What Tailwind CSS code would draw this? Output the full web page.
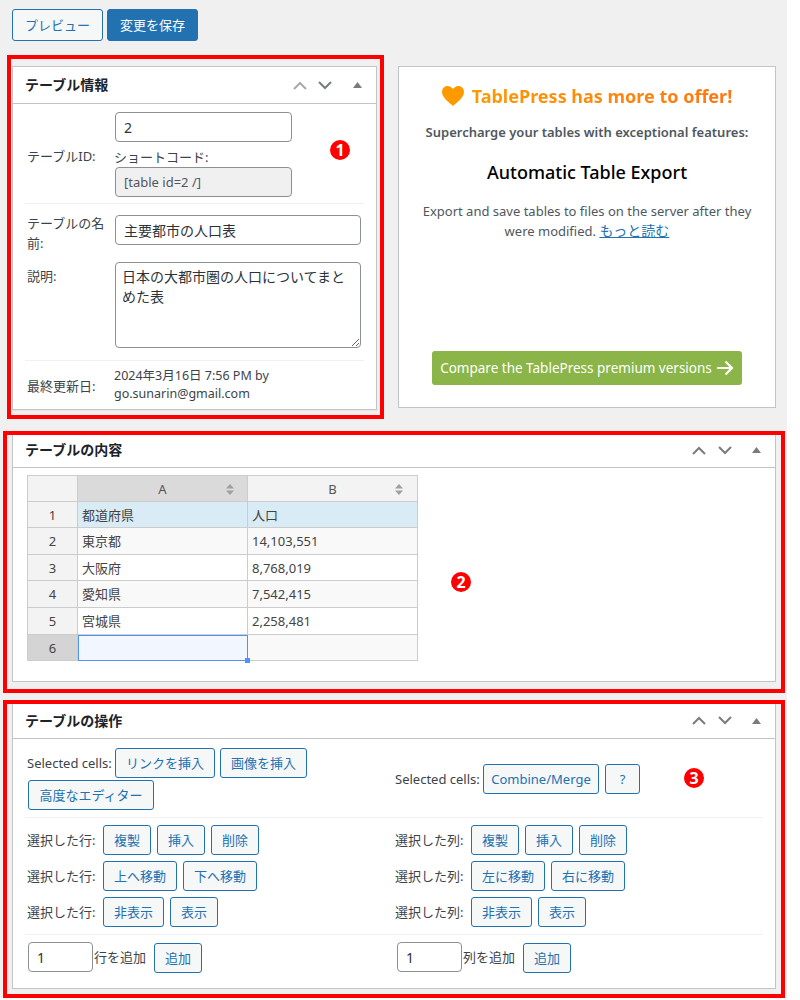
<!DOCTYPE html>
<html lang="ja">

<head>
  <meta charset="UTF-8">
  <title>TablePress</title>
  <script src="https://cdn.jsdelivr.net/npm/@tailwindcss/browser@4"></script>
</head>

<body class="bg-white">
  <main class="relative w-[787px] h-[998px] overflow-hidden bg-[#f0f0f1] pl-3 pt-[9px] text-[13px] leading-[20px] text-[#3c434a] font-['Noto_Sans','Noto_Sans_CJK_JP',sans-serif]">

    <!-- Top buttons -->
    <div class="flex gap-1">
      <button class="w-[91px] h-8 border border-[#2271b1] rounded-[3px] bg-[#f6f7f7] text-[#2271b1] text-[13px]">プレビュー</button>
      <button class="w-[91px] h-8 border border-[#2271b1] rounded-[3px] bg-[#2271b1] text-white text-[13px]">変更を保存</button>
    </div>

    <div class="flex items-start mt-[25px]">
      <!-- Table information -->
      <section class="w-[365px] h-[344px] bg-white border border-[#c3c4c7] shadow-[0_1px_1px_rgba(0,0,0,0.04)]">
        <div class="flex items-center h-[37px] pl-3 pr-[14px] border-b border-[#c3c4c7]">
          <h2 class="text-[14px] font-bold text-[#1d2327] flex-1">テーブル情報</h2>
          <svg class="w-[14px] h-[9px]" viewBox="0 0 14 9" fill="none" stroke="#a7aaad" stroke-width="2"><path d="M1 8l6-6 6 6" /></svg>
          <svg class="w-[14px] h-[9px] ml-[11px]" viewBox="0 0 14 9" fill="none" stroke="#787c82" stroke-width="2"><path d="M1 1l6 6 6-6" /></svg>
          <svg class="w-[9px] h-[6px] ml-[21px]" viewBox="0 0 9 6" fill="#787c82"><path d="M4.5 0L9 6H0z" /></svg>
        </div>
        <div class="mx-3">
          <div class="flex items-center pt-2 pb-[6px] border-b border-[#f0f0f1]">
            <label class="w-[89px] pl-[2px] pt-[2px]">テーブルID:</label>
            <div>
              <input value="2" class="block w-[177px] h-[30px] ml-px px-2 border border-[#8c8f94] rounded-[4px] text-[14px] text-[#2c3338]">
              <p class="mt-[6px] text-[13px] leading-[19px]">ショートコード:</p>
              <input disabled value="[table id=2 /]" class="block w-[177px] h-[30px] ml-px px-2 border border-[#8c8f94] rounded-[4px] bg-[#f0f0f1] text-[13px] text-[#50575e]">
            </div>
          </div>
          <div class="flex pt-[11px]">
            <label class="w-[90px] pl-[2px] pt-[-2px] -mt-[2px] leading-[20px]">テーブルの名前:</label>
            <input value="主要都市の人口表" class="block w-[246px] h-[30px] px-2 border border-[#8c8f94] rounded-[4px] text-[14px] text-[#2c3338]">
          </div>
          <div class="flex mt-[9px] pb-3 border-b border-[#f0f0f1]">
            <label class="w-[90px] pl-[2px] pt-[4px]">説明:</label>
            <textarea class="block w-[246px] h-[86px] px-[6px] py-1 border border-[#8c8f94] rounded-[4px] text-[14px] leading-[20px] text-[#2c3338]">日本の大都市圏の人口についてまとめた表</textarea>
          </div>
          <div class="flex items-center pt-[6px]">
            <label class="w-[89px] pl-[2px] pt-[2px]">最終更新日:</label>
            <p class="leading-[18px] text-[12.5px] w-[200px]">2024年3月16日 7:56 PM by go.sunarin@gmail.com</p>
          </div>
        </div>
      </section>

      <!-- Promo -->
      <section class="w-[378px] h-[342px] ml-[21px] bg-white border border-[#c3c4c7] text-center text-[#50575e]">
        <div class="flex items-center justify-center gap-2 mt-[15px] h-7">
          <svg class="w-[22px] h-[20px]" viewBox="0 0 22 20" fill="#ff9900"><path d="M11 20C8 17 0 12 0 6c0-3.500 2.500-6 5.500-6C8 0 10 1.500 11 3c1-1.500 3-3 5.500-3C19.500 0 22 2.500 22 6c0 6-8 11-11 14z" /></svg>
          <h2 class="text-[18px] font-bold leading-7 bg-linear-to-r from-[#ff9900] to-[#ff7510] bg-clip-text text-transparent">TablePress has more to offer!</h2>
        </div>
        <p class="mt-[12px] font-semibold">Supercharge your tables with exceptional features:</p>
        <h3 class="mt-[18px] text-[18px] leading-6 font-medium text-black">Automatic Table Export</h3>
        <p class="mt-[17px] px-5">Export and save tables to files on the server after they were modified. <a href="#" class="text-[#2271b1] underline text-[14px]">もっと読む</a></p>
        <a href="#" class="mt-[110px] mx-auto flex items-center justify-center gap-1 w-[310px] h-[34px] rounded-[3px] bg-[#8bb548] text-white text-[13.5px]">Compare the TablePress premium versions
          <svg class="w-[18px] h-[16px]" viewBox="0 0 18 16" fill="none" stroke="#fff" stroke-width="2.200"><path d="M1 8h15M9.500 1.500L16 8l-6.500 6.500" /></svg>
        </a>
      </section>
    </div>

    <!-- Table content -->
    <section class="w-[764px] h-[251px] mt-[21px] bg-white border border-[#c3c4c7]">
      <div class="flex items-center h-[36px] pl-3 pr-[14px] pt-[1px] border-b border-[#c3c4c7]">
        <h2 class="text-[14px] font-bold text-[#1d2327] flex-1">テーブルの内容</h2>
        <svg class="w-[14px] h-[9px]" viewBox="0 0 14 9" fill="none" stroke="#787c82" stroke-width="2"><path d="M1 8l6-6 6 6" /></svg>
        <svg class="w-[14px] h-[9px] ml-3" viewBox="0 0 14 9" fill="none" stroke="#787c82" stroke-width="2"><path d="M1 1l6 6 6-6" /></svg>
        <svg class="w-[9px] h-[6px] ml-5" viewBox="0 0 9 6" fill="#787c82"><path d="M4.500 0L9 6H0z" /></svg>
      </div>
      <table class="ml-[14px] mt-[7px] table-fixed border-collapse w-[390px] text-[#444]">
        <colgroup>
          <col class="w-[50px]">
          <col class="w-[170px]">
          <col class="w-[170px]">
        </colgroup>
        <tbody>
          <tr class="h-[26px]">
            <td class="border border-[#ccc] bg-[#f3f3f3]"></td>
            <td class="relative border border-[#ccc] bg-[#dadada] text-center text-[#555]">A
              <svg class="absolute right-[13px] top-[8px] w-2 h-[11px]" viewBox="0 0 8 11" fill="#a0a0a0"><path d="M4 0l4 4.500H0zM4 11L0 6.500h8z" /></svg>
            </td>
            <td class="relative border border-[#ccc] bg-[#f3f3f3] text-center text-[#555]">B
              <svg class="absolute right-[14px] top-[8px] w-2 h-[11px]" viewBox="0 0 8 11" fill="#a0a0a0"><path d="M4 0l4 4.500H0zM4 11L0 6.500h8z" /></svg>
            </td>
          </tr>
          <tr class="h-[26px] bg-[#d9ebf5]">
            <td class="border border-[#ccc] bg-[#f3f3f3] text-center">1</td>
            <td class="border border-[#ccc] px-1">都道府県</td>
            <td class="border border-[#ccc] px-1">人口</td>
          </tr>
          <tr class="h-[27px] bg-[#f9f9f9]">
            <td class="border border-[#ccc] bg-[#f3f3f3] text-center">2</td>
            <td class="border border-[#ccc] px-1">東京都</td>
            <td class="border border-[#ccc] px-1">14,103,551</td>
          </tr>
          <tr class="h-[26px] bg-white">
            <td class="border border-[#ccc] bg-[#f3f3f3] text-center">3</td>
            <td class="border border-[#ccc] px-1">大阪府</td>
            <td class="border border-[#ccc] px-1">8,768,019</td>
          </tr>
          <tr class="h-[27px] bg-[#f9f9f9]">
            <td class="border border-[#ccc] bg-[#f3f3f3] text-center">4</td>
            <td class="border border-[#ccc] px-1">愛知県</td>
            <td class="border border-[#ccc] px-1">7,542,415</td>
          </tr>
          <tr class="h-[27px] bg-white">
            <td class="border border-[#ccc] bg-[#f3f3f3] text-center">5</td>
            <td class="border border-[#ccc] px-1">宮城県</td>
            <td class="border border-[#ccc] px-1">2,258,481</td>
          </tr>
          <tr class="h-[26px] bg-[#f9f9f9]">
            <td class="border border-[#ccc] bg-[#d4d4d4] text-center">6</td>
            <td class="relative border border-[#ccc] bg-[#f1f6ff] outline-1 -outline-offset-1 outline-[#5292f7]">
              <span class="absolute -right-[3px] -bottom-[3px] w-[5px] h-[5px] bg-[#5292f7]"></span>
            </td>
            <td class="border border-[#ccc]"></td>
          </tr>
        </tbody>
      </table>
    </section>

    <!-- Table manipulation -->
    <section class="w-[764px] h-[287px] mt-[20px] bg-white border border-[#c3c4c7]">
      <div class="flex items-center h-[36px] pl-3 pr-[14px] border-b border-[#c3c4c7]">
        <h2 class="text-[14px] font-bold text-[#1d2327] flex-1">テーブルの操作</h2>
        <svg class="w-[14px] h-[9px]" viewBox="0 0 14 9" fill="none" stroke="#787c82" stroke-width="2"><path d="M1 8l6-6 6 6" /></svg>
        <svg class="w-[14px] h-[9px] ml-3" viewBox="0 0 14 9" fill="none" stroke="#787c82" stroke-width="2"><path d="M1 1l6 6 6-6" /></svg>
        <svg class="w-[9px] h-[6px] ml-5" viewBox="0 0 9 6" fill="#787c82"><path d="M4.500 0L9 6H0z" /></svg>
      </div>
      <div class="mx-3">
        <div class="grid grid-cols-[368px_1fr] items-center pt-[9px] pb-[7px] border-b border-[#f0f0f1]">
          <div class="flex flex-wrap items-center gap-y-[2px] pl-[2px] w-[300px]">
            <span class="w-[88px]">Selected cells:</span>
            <button class="h-[30px] w-[100px] border border-[#2271b1] rounded-[3px] bg-[#f6f7f7] text-[#2271b1]">リンクを挿入</button>
            <button class="h-[30px] w-[87px] ml-[5px] border border-[#2271b1] rounded-[3px] bg-[#f6f7f7] text-[#2271b1]">画像を挿入</button>
            <button class="h-[30px] w-[126px] ml-px border border-[#2271b1] rounded-[3px] bg-[#f6f7f7] text-[#2271b1]">高度なエディター</button>
          </div>
          <div class="flex items-center pl-[2px]">
            <span class="w-[88px]">Selected cells:</span>
            <button class="h-[30px] w-[116px] border border-[#2271b1] rounded-[3px] bg-[#f6f7f7] text-[#2271b1]">Combine/Merge</button>
            <button class="h-[30px] w-[35px] ml-[6px] border border-[#2271b1] rounded-[3px] bg-[#f6f7f7] text-[#2271b1]">?</button>
          </div>
        </div>

        <div class="grid grid-cols-[368px_1fr] gap-y-[6px] pt-[7px] pb-[7px] border-b border-[#f0f0f1]">
          <div class="flex items-center gap-[6px] pl-[2px]">
            <span class="w-[70px]">選択した行:</span>
            <button class="h-[30px] w-12 border border-[#2271b1] rounded-[3px] bg-[#f6f7f7] text-[#2271b1]">複製</button>
            <button class="h-[30px] w-12 border border-[#2271b1] rounded-[3px] bg-[#f6f7f7] text-[#2271b1]">挿入</button>
            <button class="h-[30px] w-12 border border-[#2271b1] rounded-[3px] bg-[#f6f7f7] text-[#2271b1]">削除</button>
          </div>
          <div class="flex items-center gap-[6px] pl-[2px]">
            <span class="w-[70px]">選択した列:</span>
            <button class="h-[30px] w-12 border border-[#2271b1] rounded-[3px] bg-[#f6f7f7] text-[#2271b1]">複製</button>
            <button class="h-[30px] w-12 border border-[#2271b1] rounded-[3px] bg-[#f6f7f7] text-[#2271b1]">挿入</button>
            <button class="h-[30px] w-12 border border-[#2271b1] rounded-[3px] bg-[#f6f7f7] text-[#2271b1]">削除</button>
          </div>
          <div class="flex items-center gap-[6px] pl-[2px]">
            <span class="w-[70px]">選択した行:</span>
            <button class="h-[30px] w-[74px] border border-[#2271b1] rounded-[3px] bg-[#f6f7f7] text-[#2271b1]">上へ移動</button>
            <button class="h-[30px] w-[74px] border border-[#2271b1] rounded-[3px] bg-[#f6f7f7] text-[#2271b1]">下へ移動</button>
          </div>
          <div class="flex items-center gap-[6px] pl-[2px]">
            <span class="w-[70px]">選択した列:</span>
            <button class="h-[30px] w-[74px] border border-[#2271b1] rounded-[3px] bg-[#f6f7f7] text-[#2271b1]">左に移動</button>
            <button class="h-[30px] w-[74px] border border-[#2271b1] rounded-[3px] bg-[#f6f7f7] text-[#2271b1]">右に移動</button>
          </div>
          <div class="flex items-center gap-[6px] pl-[2px]">
            <span class="w-[70px]">選択した行:</span>
            <button class="h-[30px] w-[61px] border border-[#2271b1] rounded-[3px] bg-[#f6f7f7] text-[#2271b1]">非表示</button>
            <button class="h-[30px] w-12 border border-[#2271b1] rounded-[3px] bg-[#f6f7f7] text-[#2271b1]">表示</button>
          </div>
          <div class="flex items-center gap-[6px] pl-[2px]">
            <span class="w-[70px]">選択した列:</span>
            <button class="h-[30px] w-[61px] border border-[#2271b1] rounded-[3px] bg-[#f6f7f7] text-[#2271b1]">非表示</button>
            <button class="h-[30px] w-12 border border-[#2271b1] rounded-[3px] bg-[#f6f7f7] text-[#2271b1]">表示</button>
          </div>
        </div>

        <div class="grid grid-cols-[368px_1fr] pt-[6px]">
          <div class="flex items-center pl-[3px]">
            <input value="1" class="w-[65px] h-[30px] px-2 border border-[#8c8f94] rounded-[4px] text-[14px] text-[#2c3338]">
            <span class="ml-px">行を追加</span>
            <button class="h-[30px] w-12 ml-2 mt-[2px] border border-[#2271b1] rounded-[3px] bg-[#f6f7f7] text-[#2271b1]">追加</button>
          </div>
          <div class="flex items-center pl-[4px]">
            <input value="1" class="w-[65px] h-[30px] px-2 border border-[#8c8f94] rounded-[4px] text-[14px] text-[#2c3338]">
            <span class="ml-px">列を追加</span>
            <button class="h-[30px] w-12 ml-2 mt-[2px] border border-[#2271b1] rounded-[3px] bg-[#f6f7f7] text-[#2271b1]">追加</button>
          </div>
        </div>
      </div>
    </section>

    <!-- Red annotation boxes and numbers over the screenshot -->
    <div class="absolute left-[7px] top-[55px] w-[377px] h-[364px] border-4 border-[#ff0000]"></div>
    <div class="absolute left-[3px] top-[431px] w-[782px] h-[262px] border-4 border-[#ff0000]"></div>
    <div class="absolute left-[3px] top-[700px] w-[782px] h-[298px] border-4 border-[#ff0000]"></div>
    <div class="absolute left-[330px] top-[140px] w-5 h-5 rounded-full bg-[#ff0000] text-white font-bold text-[16px] leading-5 text-center">1</div>
    <div class="absolute left-[451px] top-[572px] w-5 h-5 rounded-full bg-[#ff0000] text-white font-bold text-[16px] leading-5 text-center">2</div>
    <div class="absolute left-[684px] top-[768px] w-5 h-5 rounded-full bg-[#ff0000] text-white font-bold text-[16px] leading-5 text-center">3</div>
  </main>
</body>

</html>
